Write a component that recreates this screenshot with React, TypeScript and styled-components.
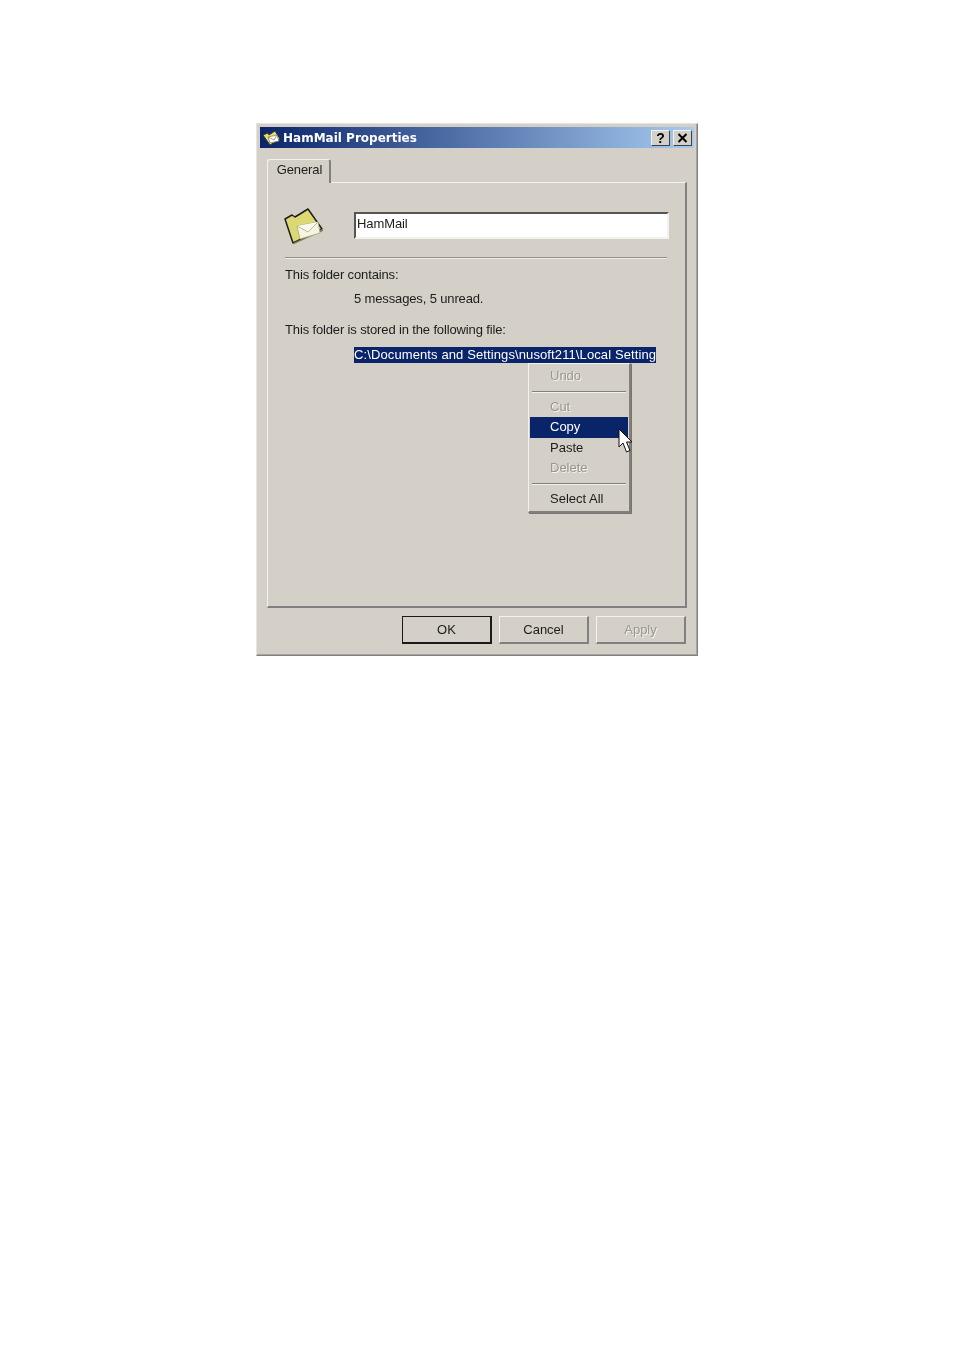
import React from 'react';
import styled, { createGlobalStyle } from 'styled-components';

const COLORS = {
  face: '#d4d0c8',
  light: '#f4f2ec',
  shadow: '#808080',
  dark: '#404040',
  navy: '#0a246a',
  sky: '#a6caf0',
  disabled: '#9a978f',
  text: '#1c1c1c',
};

const GlobalStyle = createGlobalStyle`
  html, body {
    margin: 0;
    padding: 0;
    background: #ffffff;
  }
`;

const Page = styled.div`
  width: 954px;
  height: 1350px;
  box-sizing: border-box;
  padding: 123px 0 0 256px;
  font-family: 'Liberation Sans', Arial, sans-serif;
  font-size: 13px;
  color: ${COLORS.text};
`;

/* the source is a scan, so everything is a little soft */
const Dialog = styled.div`
  width: 442px;
  height: 533px;
  box-sizing: border-box;
  padding: 3px;
  background: ${COLORS.face};
  border: 1px solid;
  border-color: #e6e4de ${COLORS.shadow} ${COLORS.shadow} #e6e4de;
  box-shadow: inset -1px -1px 0 #a8a59e;
  display: flex;
  flex-direction: column;
  filter: blur(0.3px);
`;

const TitleBar = styled.div`
  height: 21px;
  flex: none;
  display: flex;
  align-items: center;
  padding: 0 2px 0 2px;
  gap: 2px;
  background: linear-gradient(90deg, ${COLORS.navy}, ${COLORS.sky});
`;

const TitleText = styled.span`
  flex: 1;
  font-family: 'DejaVu Sans', sans-serif;
  font-weight: 700;
  font-size: 12px;
  color: #ffffff;
`;

const CaptionButton = styled.div`
  width: 19px;
  height: 16px;
  box-sizing: border-box;
  background: ${COLORS.face};
  border: 1px solid;
  border-color: ${COLORS.light} ${COLORS.dark} ${COLORS.dark} ${COLORS.light};
  display: flex;
  align-items: center;
  justify-content: center;
  font-weight: 700;
  font-size: 14px;
  color: #000000;
  margin-left: 1px;
`;

const Body = styled.div`
  flex: 1;
  display: flex;
  flex-direction: column;
  padding: 11px 7px 0 7px;
`;

const TabStrip = styled.div`
  height: 23px;
  flex: none;
  display: flex;
`;

const Tab = styled.div`
  width: 64px;
  box-sizing: border-box;
  height: 24px;
  padding: 2px 0 0 2px;
  text-align: center;
  letter-spacing: -0.1px;
  background: ${COLORS.face};
  border-top: 1px solid ${COLORS.light};
  border-left: 1px solid ${COLORS.light};
  border-right: 2px solid ${COLORS.shadow};
  border-top-left-radius: 3px;
  border-top-right-radius: 3px;
  position: relative;
  z-index: 1;
`;

const Panel = styled.div`
  width: 420px;
  height: 426px;
  box-sizing: border-box;
  padding: 24px 0 0 17px;
  border: 1px solid;
  border-width: 1px 2px 2px 1px;
  border-color: ${COLORS.light} ${COLORS.shadow} ${COLORS.shadow} ${COLORS.light};
`;

const NameRow = styled.div`
  display: flex;
  align-items: center;
  height: 37px;
`;

const IconSlot = styled.div`
  width: 69px;
  flex: none;
  display: flex;
  margin-left: -1px;
  margin-right: 1px;
`;

const NameInput = styled.div`
  width: 315px;
  height: 27px;
  box-sizing: border-box;
  background: #ffffff;
  border: 2px solid;
  border-color: #555555 ${COLORS.light} ${COLORS.light} #555555;
  padding: 1px 0 0 1px;
  line-height: 18px;
  letter-spacing: -0.1px;
`;

const Divider = styled.div`
  width: 382px;
  height: 2px;
  margin-top: 13px;
  background: linear-gradient(${COLORS.shadow} 50%, ${COLORS.light} 50%);
  opacity: 0.8;
`;

const Label = styled.div<{ $top: number; $indent?: boolean }>`
  margin-top: ${(p) => p.$top}px;
  margin-left: ${(p) => (p.$indent ? 69 : 0)}px;
  line-height: 18px;
  letter-spacing: -0.14px;
`;

const PathRow = styled.div`
  position: relative;
  margin: 8px 0 0 69px;
`;

const SelectedPath = styled.span`
  display: inline-block;
  width: 302px;
  height: 16px;
  line-height: 16px;
  white-space: nowrap;
  background: ${COLORS.navy};
  color: #ffffff;
  letter-spacing: 0.11px;
`;

const ContextMenu = styled.div`
  position: absolute;
  left: 174px;
  top: 16px;
  width: 103px;
  height: 150px;
  box-sizing: border-box;
  padding: 2px 1px 0 1px;
  background: ${COLORS.face};
  border: 1px solid;
  border-width: 1px 2px 2px 1px;
  border-color: ${COLORS.light} ${COLORS.shadow} ${COLORS.shadow} ${COLORS.light};
  box-shadow: 1px 1px 0 #77746e;
`;

const MenuItem = styled.div<{ $disabled?: boolean; $active?: boolean }>`
  height: 20.5px;
  line-height: 20px;
  padding-left: 20px;
  color: ${(p) => (p.$active ? '#ffffff' : p.$disabled ? COLORS.disabled : COLORS.text)};
  background: ${(p) => (p.$active ? COLORS.navy : 'transparent')};
  text-shadow: ${(p) => (p.$disabled ? `1px 1px 0 ${COLORS.light}` : 'none')};
`;

const MenuSeparator = styled.div`
  height: 2px;
  margin: 4px 2px 4px 2px;
  background: linear-gradient(${COLORS.shadow} 50%, ${COLORS.light} 50%);
`;

const CursorSpot = styled.div`
  position: absolute;
  left: 89px;
  top: 64px;
  line-height: 0;
`;

const ButtonRow = styled.div`
  display: flex;
  justify-content: flex-end;
  gap: 7px;
  margin: 8px 1px 0 0;
`;

const DialogButton = styled.div<{ $primary?: boolean; $disabled?: boolean }>`
  width: 90px;
  height: 28px;
  box-sizing: border-box;
  display: flex;
  align-items: center;
  justify-content: center;
  border: 1px solid;
  border-width: 1px 2px 2px 1px;
  border-color: ${(p) =>
    p.$primary ? '#1a1a1a' : `${COLORS.light} ${COLORS.shadow} ${COLORS.shadow} ${COLORS.light}`};
  color: ${(p) => (p.$disabled ? COLORS.disabled : COLORS.text)};
  text-shadow: ${(p) => (p.$disabled ? `1px 1px 0 ${COLORS.light}` : 'none')};
`;

const TinyFolder = () => (
  <svg width="19" height="16" viewBox="0 0 19 16">
    <path d="M1 5 L6 3 L7 5 L13 1 L18 9 L8 15 Z" fill="#e6e07a" stroke="#3a3a20" strokeWidth="1" />
    <path d="M6 7 L15 5 L17 11 L8 13 Z" fill="#ffffff" stroke="#77775a" strokeWidth="0.7" />
    <path d="M6 7 L12 10 L15 5" fill="none" stroke="#77775a" strokeWidth="0.7" />
  </svg>
);

const FolderIcon = () => (
  <svg width="40" height="36" viewBox="0 0 40 36">
    <path d="M1 11 L8 7 L11 9 L24 1 L38 21 L9 35 Z" fill="#dcd873" stroke="#1e1e1e" strokeWidth="1.5" strokeLinejoin="round" />
    <path d="M9 35 L38 21 L39 23 L10 36 Z" fill="#7c7a4a" />
    <path d="M13 18 L34 14 L36 25 L16 31 Z" fill="#f6f5df" stroke="#a8a88c" strokeWidth="0.8" />
    <path d="M13 18 L24 24 L34 14" fill="#fbfbf0" stroke="#a8a88c" strokeWidth="0.8" />
  </svg>
);

const PointerIcon = () => (
  <svg width="16" height="26" viewBox="0 0 16 26">
    <path
      d="M1 1 L1 19 L5 15 L8.5 24 L12 22.5 L8.5 14 L14 14 Z"
      fill="#ffffff"
      stroke="#111111"
      strokeWidth="1"
      strokeLinejoin="miter"
    />
  </svg>
);

const App: React.FC = () => (
  <Page>
    <GlobalStyle />
    <Dialog>
      <TitleBar>
        <TinyFolder />
        <TitleText>HamMail Properties</TitleText>
        <CaptionButton>?</CaptionButton>
        <CaptionButton>
          <svg width="11" height="10" viewBox="0 0 11 10">
            <path d="M1.5 1 L9.5 9 M9.5 1 L1.5 9" stroke="#000" strokeWidth="2" />
          </svg>
        </CaptionButton>
      </TitleBar>
      <Body>
        <TabStrip>
          <Tab>General</Tab>
        </TabStrip>
        <Panel>
          <NameRow>
            <IconSlot>
              <FolderIcon />
            </IconSlot>
            <NameInput>HamMail</NameInput>
          </NameRow>
          <Divider />
          <Label $top={7}>This folder contains:</Label>
          <Label $top={6} $indent>
            5 messages, 5 unread.
          </Label>
          <Label $top={13}>This folder is stored in the following file:</Label>
          <PathRow>
            <SelectedPath>C:\Documents and Settings\nusoft211\Local Setting</SelectedPath>
            <ContextMenu>
              <MenuItem $disabled>Undo</MenuItem>
              <MenuSeparator />
              <MenuItem $disabled>Cut</MenuItem>
              <MenuItem $active>Copy</MenuItem>
              <MenuItem>Paste</MenuItem>
              <MenuItem $disabled>Delete</MenuItem>
              <MenuSeparator />
              <MenuItem>Select All</MenuItem>
              <CursorSpot>
                <PointerIcon />
              </CursorSpot>
            </ContextMenu>
          </PathRow>
        </Panel>
        <ButtonRow>
          <DialogButton $primary>OK</DialogButton>
          <DialogButton>Cancel</DialogButton>
          <DialogButton $disabled>Apply</DialogButton>
        </ButtonRow>
      </Body>
    </Dialog>
  </Page>
);

export default App;
